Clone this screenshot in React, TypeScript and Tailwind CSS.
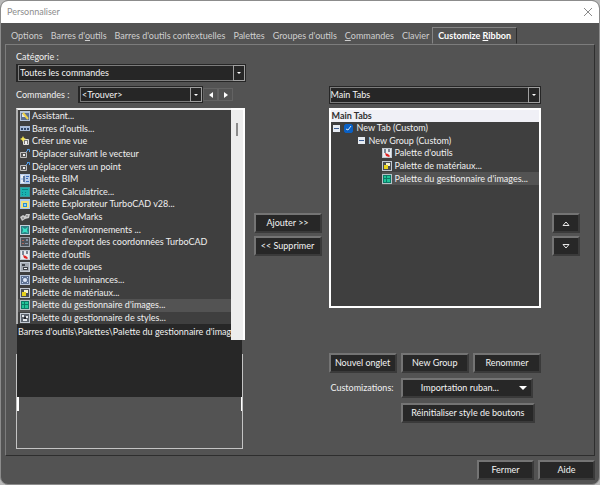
import * as React from 'react'

type IconName =
  | 'wizard'
  | 'toolbar'
  | 'view'
  | 'move'
  | 'bim'
  | 'calc'
  | 'explorer'
  | 'geo'
  | 'env'
  | 'export'
  | 'tools'
  | 'cuts'
  | 'light'
  | 'materials'
  | 'images'
  | 'styles'

const tabs: { before: string; key?: string; after?: string }[] = [
  { before: 'Options' },
  { before: "Barres d'", key: 'o', after: 'utils' },
  { before: "Barres d'outils contextuelles" },
  { before: 'Palettes' },
  { before: "Groupes d'outils" },
  { before: '', key: 'C', after: 'ommandes' },
  { before: 'Clavier' },
]

const commands: { name: string; icon: IconName; selected?: boolean }[] = [
  { name: 'Assistant...', icon: 'wizard' },
  { name: "Barres d'outils...", icon: 'toolbar' },
  { name: 'Créer une vue', icon: 'view' },
  { name: 'Déplacer suivant le vecteur', icon: 'move' },
  { name: 'Déplacer vers un point', icon: 'move' },
  { name: 'Palette BIM', icon: 'bim' },
  { name: 'Palette Calculatrice...', icon: 'calc' },
  { name: 'Palette Explorateur TurboCAD v28...', icon: 'explorer' },
  { name: 'Palette GeoMarks', icon: 'geo' },
  { name: "Palette d'environnements ...", icon: 'env' },
  { name: "Palette d'export des coordonnées TurboCAD", icon: 'export' },
  { name: "Palette d'outils", icon: 'tools' },
  { name: 'Palette de coupes', icon: 'cuts' },
  { name: 'Palette de luminances...', icon: 'light' },
  { name: 'Palette de matériaux...', icon: 'materials' },
  { name: "Palette du gestionnaire d'images...", icon: 'images', selected: true },
  { name: 'Palette du gestionnaire de styles...', icon: 'styles' },
]

const treeLeaves: { name: string; icon: IconName; selected?: boolean }[] = [
  { name: "Palette d'outils", icon: 'tools' },
  { name: 'Palette de matériaux...', icon: 'materials' },
  { name: "Palette du gestionnaire d'images...", icon: 'images', selected: true },
]

const glyphs: Record<IconName, React.ReactNode> = {
  wizard: (
    <>
      <path d="M0 0h10v10H0z" fill="#b4c3dc" />
      <path d="M1 2h8v7H1z" fill="#5b6f92" />
      <path d="M2 3h3v3H2z" fill="#dfe6f0" />
      <path d="M3 2l5 6" stroke="#f0d24a" strokeWidth="2" />
    </>
  ),
  toolbar: (
    <>
      <path d="M0 2h10v5H0z" fill="#a9bbd8" />
      <path d="M1 4h2v2H1zM4 4h2v2H4zM7 4h2v2H7z" fill="#2d4468" />
    </>
  ),
  view: (
    <>
      <path d="M3.5 3.5h5v5h-5z" fill="#777" stroke="#ddd" />
      <path d="M3 0l1 2 2 1-2 1-1 2-1-2-2-1 2-1z" fill="#f5e552" />
      <path d="M5 5h2v3H5z" fill="#eee" />
    </>
  ),
  move: (
    <>
      <path d="M.5 3.5h6v5h-6z" fill="#555" stroke="#bdbdbd" />
      <path d="M3 5h2v2H3z" fill="#eee" />
      <path d="M6 3l3-3M7 .5h2.500v2.500" stroke="#4f9be8" fill="none" />
    </>
  ),
  bim: (
    <>
      <path d="M0 0h10v10H0z" fill="#b7cbe8" />
      <path d="M1 1h3v3H1zM1 6h3v3H1z" fill="#e9eef6" />
      <path d="M3 2h2v6H3z" fill="#5b759c" />
      <path d="M6 2h3v1H6zM6 4h2v1H6zM6 7h3v1H6z" fill="#3c6fc0" />
    </>
  ),
  calc: (
    <>
      <path d="M0 0h10v10H0z" fill="#3c9aa0" />
      <path d="M1 1h8v8H1z" fill="#19b3b0" />
      <path d="M2 2h6v1H2zM2 5h1v1H2zM5 5h1v1H5zM2 7h1v1H2zM5 7h1v1H5z" fill="#0f7f86" />
    </>
  ),
  explorer: (
    <>
      <path d="M0 0h10v10H0z" fill="#a9c8ee" />
      <path d="M1 2h8v7H1z" fill="#f0e17a" />
      <path d="M3 4h4v4H3z" fill="#2a8fd0" />
      <path d="M4 5h2v2H4z" fill="#8fd0f5" />
    </>
  ),
  geo: (
    <>
      <path d="M0 5l3-2 2 1 1-2 4 0-1 4-4 1-3 2z" fill="#c9c9c9" />
      <path d="M2 5h2v2H2zM6 3h2v2H6z" fill="#9a9a9a" />
    </>
  ),
  env: (
    <>
      <path d="M0 0h10v10H0z" fill="#c3cfda" />
      <path d="M1 1h8v8H1z" fill="#2c7d84" />
      <path d="M2 2l3 2 3-2-1 3 1 3-3-1-3 1 1-3z" fill="#38e0c4" />
    </>
  ),
  export: (
    <>
      <path d="M0 0h10v10H0z" fill="#9aa0a8" />
      <path d="M1 1h8v8H1z" fill="#4d5259" />
      <path d="M2 3h2v1H2zM2 6h2v1H2z" fill="#a8675c" />
      <path d="M6 2h2v2H6zM5 6h3v1H5z" fill="#8291a6" />
    </>
  ),
  tools: (
    <>
      <path d="M0 0h10v10H0z" fill="#c2c9d2" />
      <path d="M1 1h8v8H1z" fill="#e8ecf1" />
      <path d="M2 1h2v4H2zM6 1h2v3H6z" fill="#7d8796" />
      <path d="M3 5l3 1 2 2-1 1-3-1z" fill="#e02424" />
    </>
  ),
  cuts: (
    <>
      <path d="M0 0h10v10H0z" fill="#c2c9d2" />
      <path d="M1 1h8v8H1z" fill="#a2a7af" />
      <path d="M2 2h3v2H2zM3 5h5v3H3z" fill="#3d4046" />
      <path d="M4 6h3v1H4z" fill="#f1f1f1" />
    </>
  ),
  light: (
    <>
      <path d="M0 0h10v10H0z" fill="#b7c5da" />
      <path d="M1 1h8v8H1z" fill="#5e7192" />
      <circle cx="5" cy="5" r="2" fill="#dfe9f8" />
      <path d="M2 2h1v1H2zM7 2h1v1H7zM2 7h1v1H2zM7 7h1v1H7z" fill="#c9dcf7" />
    </>
  ),
  materials: (
    <>
      <path d="M0 0h10v10H0z" fill="#c2c9d2" />
      <path d="M1 1h8v8H1z" fill="#4a4e55" />
      <path d="M4 2h4v3H4z" fill="#f4f1d0" />
      <path d="M2 4h4v4H2z" fill="#e8d21d" />
    </>
  ),
  images: (
    <>
      <path d="M0 0h10v10H0z" fill="#b5c2c6" />
      <path d="M1 1h8v8H1z" fill="#0c7a68" />
      <path d="M2 2h2v2H2zM5 2h3v2H5zM2 5h2v3H2zM5 5h3v3H5z" fill="#20c497" />
    </>
  ),
  styles: (
    <>
      <path d="M0 0h10v10H0z" fill="#c2c9d2" />
      <path d="M1 1h8v8H1z" fill="#5c636d" />
      <path d="M2 2h2v2H2zM6 3h2v2H6zM3 6h4v2H3z" fill="#e5e8ec" />
      <path d="M4 4h2v2H4z" fill="#23262b" />
    </>
  ),
}

function Icon({ name }: { name: IconName }) {
  return (
    <svg viewBox="0 0 10 10" className="size-[10px] shrink-0" aria-hidden="true">
      {glyphs[name]}
    </svg>
  )
}

function Select({ id, label, value, className }: { id: string; label?: string; value: string; className: string }) {
  return (
    <div className={`relative border border-[#262626] bg-[#262626] ${className}`}>
      <select
        id={id}
        aria-label={label}
        className="block h-full w-full appearance-none border border-[#7c7c7c] bg-[#262626] text-[#f4f4f4] outline-none [padding-inline:inherit]"
      >
        <option>{value}</option>
      </select>
      <span className="pointer-events-none absolute inset-y-0 right-0 flex w-3 items-center justify-center border border-[#a0a0a0] bg-[#262626]">
        <svg viewBox="0 0 4 2" className="h-[2px] w-1" aria-hidden="true">
          <path d="M0 0h4L2 2z" fill="#fff" />
        </svg>
      </span>
    </div>
  )
}

function Button({ className = '', children, ...props }: React.ComponentProps<'button'>) {
  return (
    <button
      type="button"
      className={`flex h-5 items-center justify-center border-2 border-t-[#747474] border-r-[#3a3a3a] border-b-[#3a3a3a] border-l-[#747474] bg-[#272727] whitespace-nowrap text-[#f4f4f4] ${className}`}
      {...props}
    >
      {children}
    </button>
  )
}

function Toggle() {
  return (
    <button type="button" aria-label="Réduire" className="flex size-[7px] shrink-0 items-center justify-center bg-[#e6ebf2]">
      <span className="h-px w-[5px] bg-[#3f5f95]" />
    </button>
  )
}

export default function App() {
  return (
    <div className="flex min-h-screen bg-[#b9b9b9] font-['Lato','Open_Sans',sans-serif] text-[9px] leading-3 text-[#f0f0f0]">
      <div className="flex w-full flex-col overflow-hidden rounded-lg border border-[#8c8c8c] bg-[#535353]">
        <header className="flex h-[22px] items-center justify-between bg-white pr-[7px] pl-[6px] text-[#8d8d8d]">
          <h1>Personnaliser</h1>
          <button type="button" aria-label="Fermer la fenêtre">
            <svg viewBox="0 0 8 8" className="size-2" aria-hidden="true">
              <path d="M0 0l8 8M8 0L0 8" stroke="#8a8a8a" fill="none" />
            </svg>
          </button>
        </header>

        <main className="flex grow flex-col px-1 pt-1 pb-1">
          <div role="tablist" className="flex items-end whitespace-nowrap text-[#cfcfcf]">
            <div className="flex gap-2 pb-[2px] pl-[6px]">
              {tabs.map(({ before, key, after }) => (
                <button key={before + after} type="button" role="tab" aria-selected="false">
                  {before}
                  {key && <u>{key}</u>}
                  {after}
                </button>
              ))}
            </div>
            <button
              type="button"
              role="tab"
              aria-selected="true"
              className="ml-[3px] h-[17px] border border-t-[#858585] border-r-[#2c2c2c] border-b-[#535353] border-l-[#858585] px-[5px] font-bold text-white"
            >
              Customize <u>R</u>ibbon
            </button>
          </div>

          <section className="grid grow grid-cols-[229fr_83px_212fr_39px] border border-t-[#7c7c7c] border-r-[#2e2e2e] border-b-[#2e2e2e] border-l-[#7c7c7c] pt-[6px] pr-[14px] pb-[6px] pl-[10px]">
            <div className="flex min-w-0 flex-col">
              <label htmlFor="category">Catégorie :</label>
              <Select id="category" value="Toutes les commandes" className="mt-px h-[18px] px-px" />
              <div className="mt-1 flex h-[17px] items-center">
                <label htmlFor="search" className="w-[62px]">
                  Commandes :
                </label>
                <Select id="search" value="&lt;Trouver&gt;" className="h-[17px] w-[125px] px-px" />
                <button type="button" aria-label="Précédent" className="flex h-[13px] w-[15px] items-center justify-center border border-[#636363]">
                  <svg viewBox="0 0 4 6" className="h-[6px] w-1" aria-hidden="true">
                    <path d="M4 0v6L0 3z" fill="#fff" />
                  </svg>
                </button>
                <button type="button" aria-label="Suivant" className="flex h-[13px] w-[15px] items-center justify-center border border-[#636363]">
                  <svg viewBox="0 0 4 6" className="h-[6px] w-1" aria-hidden="true">
                    <path d="M0 0v6l4-3z" fill="#fff" />
                  </svg>
                </button>
              </div>

              <div className="relative mt-[5px] flex grow flex-col">
                <ul
                  aria-label="Commandes"
                  className="mr-[2px] flex h-[216px] flex-col border-t-2 border-l-2 border-t-[#f0f0f0] border-l-[#b0b0b0] bg-[#3f3f3f]"
                >
                  {commands.map(({ name, icon, selected }) => (
                    <li
                      key={name}
                      className={`flex min-h-0 flex-1 items-center gap-[2px] pl-[2px] whitespace-nowrap ${selected ? 'bg-[#535353]' : ''}`}
                    >
                      <Icon name={icon} />
                      {name}
                    </li>
                  ))}
                </ul>
                <p className="relative mr-1 ml-px h-[73px] overflow-hidden bg-[#272727] px-px pt-[2px] whitespace-nowrap">
                  Barres d'outils\Palettes\Palette du gestionnaire d'images
                </p>
                {/* group frame, runs up behind the path box */}
                <div className="-mt-[43px] mr-[3px] flex min-h-[94px] grow justify-between border border-t-0 border-[#c4c4c4] pt-[43px]">
                  <span className="h-[14px] w-[2px] bg-white" />
                  <span className="h-[14px] w-px bg-white" />
                </div>
                <div className="absolute top-0 right-px flex h-[232px] w-[14px] justify-center border-t-2 border-r-2 border-white bg-[#ededed] pt-[13px]">
                  <span className="h-[13px] w-[2px] bg-[#8b8b8b]" />
                </div>
              </div>
            </div>

            <div className="flex flex-col gap-[3px] pt-[162px] pl-2">
              <Button className="w-[68px]">Ajouter &gt;&gt;</Button>
              <Button className="w-[68px]">&lt;&lt; Supprimer</Button>
            </div>

            <div className="flex min-w-0 flex-col pt-[35px]">
              <Select id="tabs" label="Onglets" value="Main Tabs" className="h-[18px]" />
              <div className="mt-1 h-[200px] border-2 border-white bg-[#3f3f3f]">
                <h2 className="h-3 bg-[#f0f0f6] px-px font-bold text-[#303030]">Main Tabs</h2>
                <ul className="flex h-[63px] flex-col *:min-h-0 *:flex-1">
                  <li className="flex items-center pl-[2px]">
                    <Toggle />
                    <label className="flex items-center gap-1 pl-1">
                      <span className="relative flex">
                        <input
                          type="checkbox"
                          defaultChecked
                          className="size-[9px] appearance-none rounded-xs border border-[#8fb4de] checked:border-[#0a60c4] checked:bg-[#0a60c4]"
                        />
                        <svg viewBox="0 0 9 9" className="pointer-events-none absolute inset-0" aria-hidden="true">
                          <path d="M2 5l2 1 3-4" stroke="#d5e5fa" fill="none" />
                        </svg>
                      </span>
                      New Tab (Custom)
                    </label>
                  </li>
                  <li className="flex items-center gap-1 pl-[27px]">
                    <Toggle />
                    New Group (Custom)
                  </li>
                  {treeLeaves.map(({ name, icon, selected }) => (
                    <li key={name} className="flex pl-[51px]">
                      <span className={`flex items-center gap-[3px] whitespace-nowrap ${selected ? 'grow bg-[#535353]' : ''}`}>
                        <Icon name={icon} />
                        {name}
                      </span>
                    </li>
                  ))}
                </ul>
              </div>
              <div className="mt-[45px] grid grid-cols-3 gap-x-1 gap-y-[5px]">
                <Button>Nouvel onglet</Button>
                <Button>New Group</Button>
                <Button>Renommer</Button>
                <label htmlFor="import" className="pt-1 pl-[2px]">
                  Customizations:
                </label>
                <Button id="import" className="col-span-2 mr-2 gap-5 pl-[14px]">
                  Importation ruban...
                  <svg viewBox="0 0 8 4" className="h-1 w-2" aria-hidden="true">
                    <path d="M0 0h8L4 4z" fill="#fff" />
                  </svg>
                </Button>
                <Button className="col-span-2 col-start-2 mr-[6px]">Réinitialiser style de boutons</Button>
              </div>
            </div>

            <div className="flex flex-col items-end gap-[3px] pt-[162px]">
              <Button aria-label="Monter" className="w-7">
                <svg viewBox="0 0 8 5" className="h-[5px] w-2" aria-hidden="true">
                  <path d="M1 4.5h6L4 1z" stroke="#e8e8e8" fill="none" />
                </svg>
              </Button>
              <Button aria-label="Descendre" className="w-7">
                <svg viewBox="0 0 8 5" className="h-[5px] w-2" aria-hidden="true">
                  <path d="M1 .5h6L4 4z" stroke="#e8e8e8" fill="none" />
                </svg>
              </Button>
            </div>
          </section>

          <footer className="flex justify-end gap-1 pt-1">
            <Button className="w-[57px]">Fermer</Button>
            <Button className="w-[57px]">Aide</Button>
          </footer>
        </main>
      </div>
    </div>
  )
}
